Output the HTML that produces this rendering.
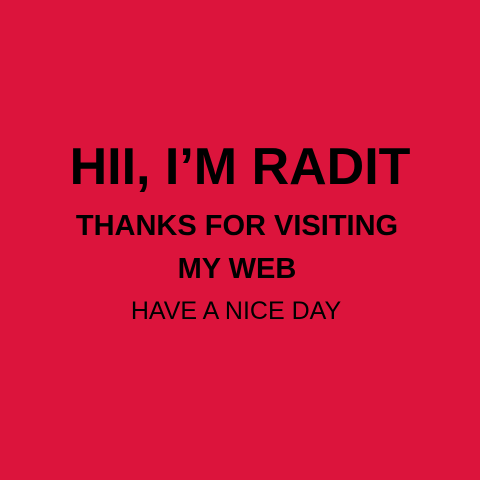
<!DOCTYPE html>
<html><head><meta charset="utf-8"><style>
html,body{margin:0;padding:0}
body{width:480px;height:480px;background:#DC143C;position:relative;overflow:hidden;font-family:"Liberation Sans",sans-serif;color:#000}
.l{position:absolute;left:0;width:480px;text-align:center;line-height:1;white-space:nowrap}
</style></head><body>
<div class="l" style="top:141px;font-size:52px;font-weight:bold">HII, I’M RADIT</div>
<div class="l" style="top:212px;font-size:29px;font-weight:bold;left:-3px">THANKS FOR VISITING</div>
<div class="l" style="top:255px;font-size:29px;font-weight:bold;left:-3px">MY WEB</div>
<div class="l" style="top:299px;font-size:25px;left:-4px">HAVE A NICE DAY</div>
</body></html>
